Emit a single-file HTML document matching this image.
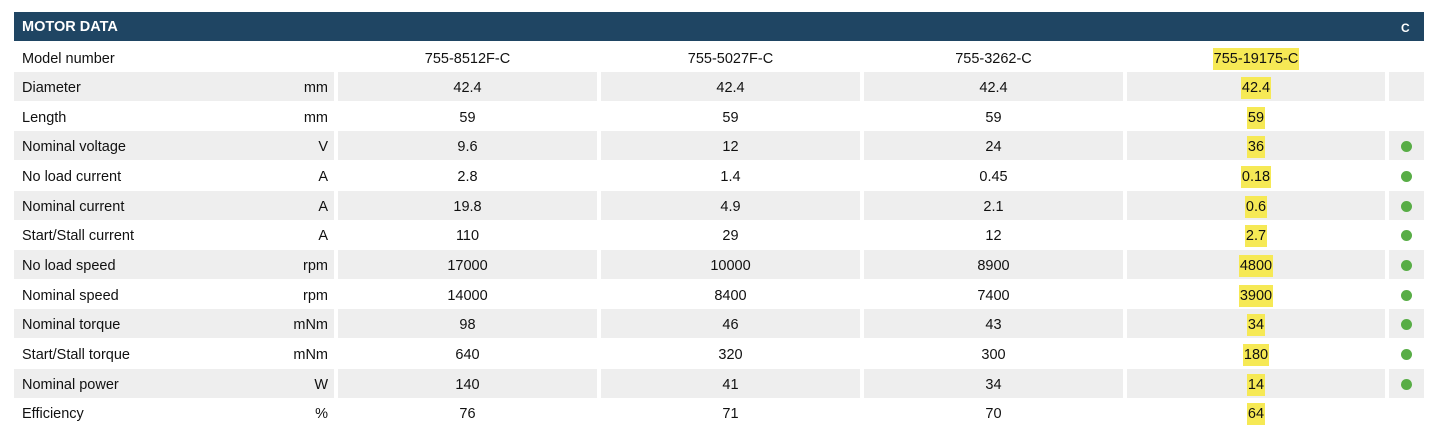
<!DOCTYPE html>
<html><head><style>
body{margin:0;background:#fff;font-family:"Liberation Sans",Arial,sans-serif;font-size:14.5px;color:#111}
.hdr{position:absolute;left:14px;top:12px;width:1410px;height:29px;background:#1f4563;color:#fff;font-weight:bold}
.hdr span{position:absolute;left:8px;top:7px;font-size:14.5px}
.hdr b{position:absolute;left:1387px;top:9px;font-size:12px}
.row{position:absolute;left:14px;width:1410px;height:29px}
.c{position:absolute;top:0;height:100%;line-height:32px}
.g .c{background:#eee}
.l{left:0;width:320px}
.l i{font-style:normal;position:absolute;left:8px}
.l u{text-decoration:none;position:absolute;right:6px}
.v{text-align:center}
.v1{left:324px;width:259px}.v2{left:587px;width:259px}.v3{left:850px;width:259px}.v4{left:1113px;width:258px}.v5{left:1375px;width:35px}
.y{background:#f6e955;padding:3px 1px}
.dot{position:absolute;left:12px;top:10px;width:11px;height:11px;border-radius:50%;background:#58ad46}
</style></head><body>
<div class="hdr"><span>MOTOR DATA</span><b>C</b></div>
<div id="t"></div>
<script>
var rows=[["Model number","","755-8512F-C","755-5027F-C","755-3262-C","755-19175-C",0],
["Diameter","mm","42.4","42.4","42.4","42.4",0],
["Length","mm","59","59","59","59",0],
["Nominal voltage","V","9.6","12","24","36",1],
["No load current","A","2.8","1.4","0.45","0.18",1],
["Nominal current","A","19.8","4.9","2.1","0.6",1],
["Start/Stall current","A","110","29","12","2.7",1],
["No load speed","rpm","17000","10000","8900","4800",1],
["Nominal speed","rpm","14000","8400","7400","3900",1],
["Nominal torque","mNm","98","46","43","34",1],
["Start/Stall torque","mNm","640","320","300","180",1],
["Nominal power","W","140","41","34","14",1],
["Efficiency","%","76","71","70","64",0]];
var h="";
rows.forEach(function(r,i){
var top=42.5+i*29.64;
h+='<div class="row'+(i%2?' g':'')+'" style="top:'+top+'px">'+
'<div class="c l"><i>'+r[0]+'</i><u>'+r[1]+'</u></div>'+
'<div class="c v v1">'+r[2]+'</div><div class="c v v2">'+r[3]+'</div><div class="c v v3">'+r[4]+'</div>'+
'<div class="c v v4"><span class="y">'+r[5]+'</span></div><div class="c v5">'+(r[6]?'<div class="dot"></div>':'')+'</div></div>';
});
document.getElementById("t").innerHTML=h;
</script>
</body></html>
